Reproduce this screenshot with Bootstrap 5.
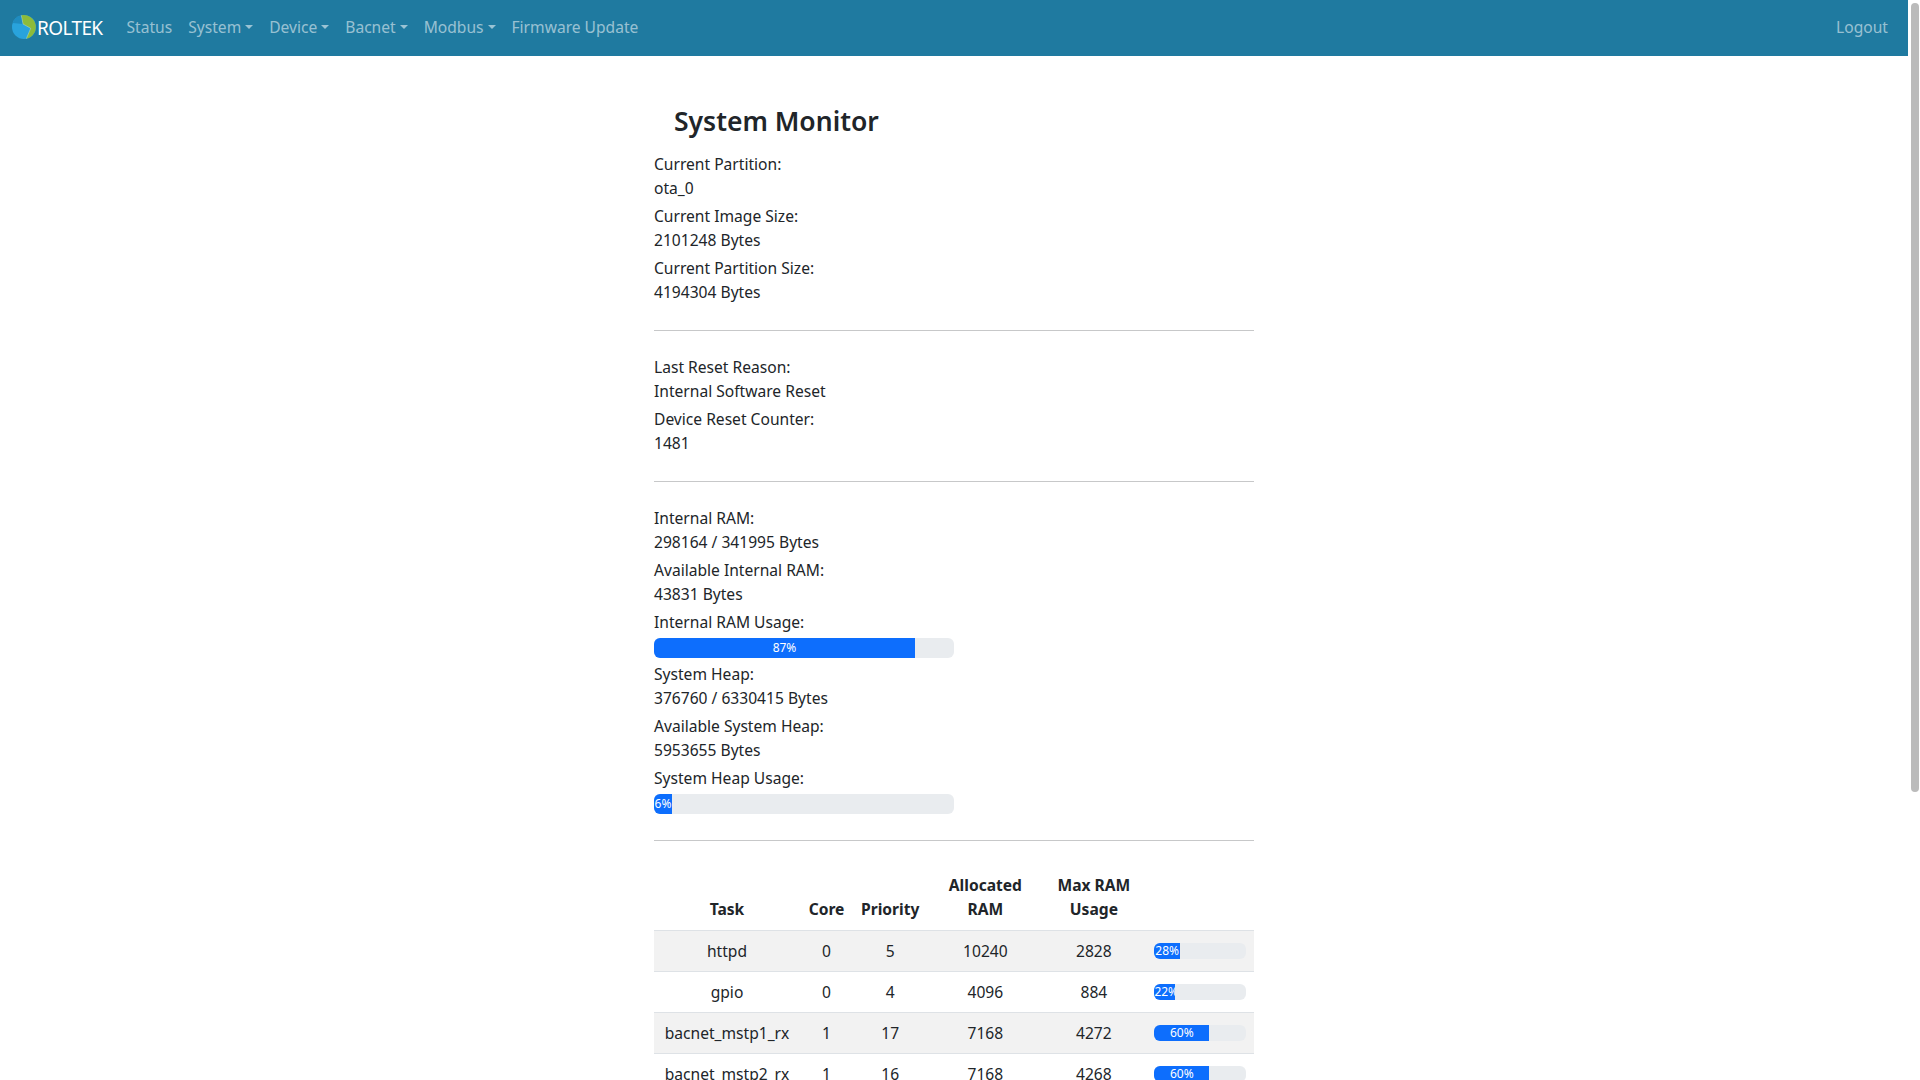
<!DOCTYPE html>
<html lang="en">

<head>
  <meta charset="UTF-8">
  <title>System Monitor</title>
  <meta name="viewport" content="width=device-width, initial-scale=1.0" />
  <link href="https://cdn.jsdelivr.net/npm/bootstrap@5.3.0/dist/css/bootstrap.min.css" rel="stylesheet" />
  <style>
    body {
      font-family: "Noto Sans", "Open Sans", sans-serif;
      font-size: 15.6px;
      min-height: 1470px;
      padding-right: 12px;
    }

    .top-bar {
      background-color: #1f7aa0;
      height: 56px;
      padding: 0 12px;
    }

    .top-bar .container-fluid {
      padding: 0;
    }

    .top-bar .nav-link {
      font-size: 15.6px;
    }

    .brand-box {
      gap: 1px;
      margin-right: 16px;
      color: #fff;
      font-size: 19px;
      letter-spacing: -0.6px;
    }

    .brand-box svg {
      margin-bottom: 2px;
    }

    .monitor-box {
      width: 600px;
      margin: 0 auto;
      padding-top: 45px;
    }

    .monitor-title {
      font-size: 26.5px;
      font-weight: 600;
      line-height: 40px;
      margin: 0 0 11px 20px;
    }

    .info-item {
      line-height: 24px;
      margin-bottom: 4px;
    }

    .monitor-box hr {
      margin: 26px 0 24px;
      opacity: 0.25;
    }

    .wide-bar {
      width: 300px;
      height: 20px;
      margin-top: 4px;
    }

    .row-bar {
      height: 16px;
    }

    .task-table th,
    .task-table td {
      padding: 8px;
      line-height: 24px;
    }

    .task-table th {
      padding-bottom: 9px;
    }

    .task-table td {
      vertical-align: middle;
    }

    .task-table td:last-child {
      padding-left: 10px;
    }

    /* window scrollbar, the headless browser hides the real one */
    .page-scroll {
      position: fixed;
      top: 3px;
      right: 1px;
      width: 8px;
      height: 789px;
      background-color: #bbb;
      border-radius: 4px;
    }
  </style>
</head>

<body>
  <nav class="navbar navbar-expand-lg navbar-dark top-bar">
    <div class="container-fluid">
      <a class="navbar-brand d-flex align-items-center brand-box" href="#">
        <svg width="24" height="24" viewBox="0 0 24 24">
          <circle cx="12" cy="12" r="12" fill="#29a3dc" />
          <path d="M9.3 .3A12 12 0 0 0 .6 8L11 9Z" fill="#1f8cc0" />
          <path d="M9.3 .3A12 12 0 0 1 14.3 23.8L18.7 13.3 11 9Z" fill="#8dbb3a" />
          <path d="M9.3 .3L11 9 18.7 13.3 14.3 23.8" fill="none" stroke="#fff" stroke-opacity=".35" stroke-width=".8" />
        </svg>
        <span>ROLTEK</span>
      </a>
      <ul class="navbar-nav me-auto">
        <li class="nav-item"><a class="nav-link" href="#">Status</a></li>
        <li class="nav-item"><a class="nav-link dropdown-toggle" href="#">System</a></li>
        <li class="nav-item"><a class="nav-link dropdown-toggle" href="#">Device</a></li>
        <li class="nav-item"><a class="nav-link dropdown-toggle" href="#">Bacnet</a></li>
        <li class="nav-item"><a class="nav-link dropdown-toggle" href="#">Modbus</a></li>
        <li class="nav-item"><a class="nav-link" href="#">Firmware Update</a></li>
      </ul>
      <ul class="navbar-nav">
        <li class="nav-item"><a class="nav-link" href="#">Logout</a></li>
      </ul>
    </div>
  </nav>

  <main class="monitor-box">
    <h3 class="monitor-title">System Monitor</h3>

    <div class="info-item">Current Partition:<br>ota_0</div>
    <div class="info-item">Current Image Size:<br>2101248 Bytes</div>
    <div class="info-item">Current Partition Size:<br>4194304 Bytes</div>
    <hr>

    <div class="info-item">Last Reset Reason:<br>Internal Software Reset</div>
    <div class="info-item">Device Reset Counter:<br>1481</div>
    <hr>

    <div class="info-item">Internal RAM:<br>298164 / 341995 Bytes</div>
    <div class="info-item">Available Internal RAM:<br>43831 Bytes</div>
    <div class="info-item">Internal RAM Usage:
      <div class="progress wide-bar">
        <div class="progress-bar" style="width: 87%">87%</div>
      </div>
    </div>
    <div class="info-item">System Heap:<br>376760 / 6330415 Bytes</div>
    <div class="info-item">Available System Heap:<br>5953655 Bytes</div>
    <div class="info-item">System Heap Usage:
      <div class="progress wide-bar">
        <div class="progress-bar" style="width: 6%">6%</div>
      </div>
    </div>
    <hr>

    <table class="table table-striped text-center task-table">
      <thead>
        <tr>
          <th style="width: 146px">Task</th>
          <th style="width: 53px">Core</th>
          <th style="width: 73px">Priority</th>
          <th style="width: 116px">Allocated RAM</th>
          <th style="width: 101px">Max RAM Usage</th>
          <th></th>
        </tr>
      </thead>
      <tbody>
        <tr>
          <td>httpd</td>
          <td>0</td>
          <td>5</td>
          <td>10240</td>
          <td>2828</td>
          <td><div class="progress row-bar"><div class="progress-bar" style="width: 28%">28%</div></div></td>
        </tr>
        <tr>
          <td>gpio</td>
          <td>0</td>
          <td>4</td>
          <td>4096</td>
          <td>884</td>
          <td><div class="progress row-bar"><div class="progress-bar" style="width: 22%">22%</div></div></td>
        </tr>
        <tr>
          <td>bacnet_mstp1_rx</td>
          <td>1</td>
          <td>17</td>
          <td>7168</td>
          <td>4272</td>
          <td><div class="progress row-bar"><div class="progress-bar" style="width: 60%">60%</div></div></td>
        </tr>
        <tr>
          <td>bacnet_mstp2_rx</td>
          <td>1</td>
          <td>16</td>
          <td>7168</td>
          <td>4268</td>
          <td><div class="progress row-bar"><div class="progress-bar" style="width: 60%">60%</div></div></td>
        </tr>
      </tbody>
    </table>
  </main>

  <div class="page-scroll"></div>

  <script src="https://cdn.jsdelivr.net/npm/bootstrap@5.3.0/dist/js/bootstrap.bundle.min.js"></script>
</body>

</html>
